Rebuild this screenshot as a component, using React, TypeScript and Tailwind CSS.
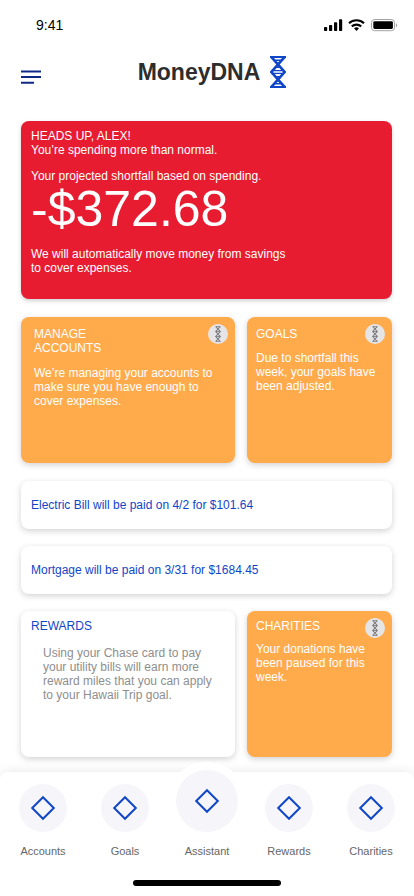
import React from 'react';
import clsx from 'clsx';

interface DnaIconProps {
    className?: string;
}

const DnaIcon: React.FC<DnaIconProps> = ({className}) => (
    <svg viewBox="0 0 16 32" fill="none" stroke="currentColor" className={className} aria-hidden="true">
        <path d="M1.2 .8L14.6 16L1.2 31.2" strokeWidth="2.6"/>
        <path d="M14.8 .8L1.4 16L14.8 31.2" strokeWidth="2.6"/>
        <path d="M0 1h16M0 31h16" strokeWidth="2"/>
        <path d="M3.5 4.2h9M5 11.4h6M2 14.6h12M2 17.4h12M5 20.6h6M3.5 27.8h9" strokeWidth="1.4"/>
    </svg>
);

// Small three-turn helix shown in the corner of managed cards
const DnaBadge: React.FC = () => (
    <span className="absolute right-[7px] top-[7px] flex size-5 items-center justify-center rounded-full bg-[#e5e5e8] text-[#77777b]">
        <svg viewBox="0 0 6 16" fill="none" stroke="currentColor" className="h-4 w-1.5" aria-hidden="true">
            <path d="M.7 .5L5.3 5.5L.7 10.5L5.3 15.5M5.3 .5L.7 5.5L5.3 10.5L.7 15.5" strokeWidth="1.1"/>
            <path d="M.7 .6h4.6M1 5.5h4M1 10.5h4M.7 15.4h4.6" strokeWidth=".8"/>
        </svg>
    </span>
);

const StatusBar: React.FC = () => (
    <div className="flex h-[50px] items-center justify-between pl-9 pr-4">
        <span className="text-sm">9:41</span>
        <svg width="75" height="14" viewBox="0 0 75 14" aria-hidden="true">
            <rect x="1" y="9" width="3.2" height="4" rx=".8"/>
            <rect x="6" y="7" width="3.2" height="6" rx=".8"/>
            <rect x="11" y="4.2" width="3.2" height="8.8" rx=".8"/>
            <rect x="16" y="1.2" width="3.2" height="11.8" rx=".8"/>
            <g fill="none" stroke="black" strokeWidth="2.1">
                <path d="M26 5.2A11 11 0 0 1 41 5.2"/>
                <path d="M28.8 8.4A7 7 0 0 1 38.2 8.4"/>
            </g>
            <path d="M31 10.2A4 4 0 0 1 36 10.2L33.5 12.9Z"/>
            <rect x="48.5" y="1.5" width="23" height="11.2" rx="3" fill="none" stroke="#a3a3a3"/>
            <rect x="50.3" y="3.2" width="19.6" height="7.8" rx="1.4"/>
            <path d="M73 5.2v4c1.6-.6 1.6-3.4 0-4" fill="#a3a3a3"/>
        </svg>
    </div>
);

interface CardProps {
    title: string;
    children: React.ReactNode;
    badge?: boolean;
    className?: string;
    titleClass?: string;
    textClass?: string;
}

const Card: React.FC<CardProps> = ({title, children, badge, className, titleClass, textClass}) => (
    <section className={clsx('relative min-h-[146px] rounded-lg shadow-[0_2px_6px_rgba(0,0,0,0.18)]', className)}>
        <h2 className={titleClass}>{title}</h2>
        <p className={textClass}>{children}</p>
        {badge && <DnaBadge/>}
    </section>
);

const Bill: React.FC<{ children: React.ReactNode }> = ({children}) => (
    <p className="flex h-12 items-center rounded-lg bg-white px-2.5 text-[#1046c8] shadow-[0_2px_6px_rgba(0,0,0,0.18)]">
        {children}
    </p>
);

const tabs = [
    {label: 'Accounts'},
    {label: 'Goals'},
    {label: 'Assistant', main: true},
    {label: 'Rewards'},
    {label: 'Charities'},
];

const TabBar: React.FC = () => (
    <nav className="relative mt-[15px] rounded-t-lg bg-white px-0.5 pb-2.5 pt-3 shadow-[0_0_12px_rgba(0,0,0,0.1)]">
        <span className="absolute -top-2.5 left-1/2 size-[82px] -translate-x-1/2 rounded-full bg-white"/>
        <div className="relative grid grid-cols-5">
            {tabs.map(({label, main}) => (
                <button key={label} className="flex flex-col items-center text-[11px] leading-4 text-[#666666]">
                    <span className="flex h-12 items-end justify-center">
                        <span
                            className={clsx('flex items-center justify-center rounded-full bg-[#f6f6fa]', main ? 'size-[62px]' : 'size-12')}>
                            <svg width="26" height="26" viewBox="0 0 26 26" fill="none" stroke="#1046c8"
                                 strokeWidth="2" aria-hidden="true">
                                <path d="M13 2.2L23.8 13L13 23.8L2.2 13Z"/>
                            </svg>
                        </span>
                    </span>
                    <span className="mt-[11px]">{label}</span>
                </button>
            ))}
        </div>
        <div className="mx-auto mt-[21px] h-1.5 w-[148px] rounded-full bg-black"/>
    </nav>
);

const App: React.FC = () => {
    return (
        <div
            className="flex min-h-screen flex-col overflow-hidden bg-white font-['Liberation_Sans',Arial,sans-serif] text-xs leading-[14px] text-black">
            <StatusBar/>
            <header className="mt-1.5 grid grid-cols-[1fr_auto_1fr] items-end pl-[21px] pr-[11px]">
                <button aria-label="Menu" className="mb-1 w-5">
                    <svg width="20" height="14" viewBox="0 0 20 14" stroke="#0f2a86" strokeWidth="2"
                         aria-hidden="true">
                        <path d="M0 1.5h20M0 7h20M0 12.8h13"/>
                    </svg>
                </button>
                <div className="flex gap-2.5">
                    <h1 className="text-[23px] font-bold leading-8 text-[#2d2d2d]">MoneyDNA</h1>
                    <DnaIcon className="h-8 w-4 text-[#1046c8]"/>
                </div>
            </header>

            <main className="mt-[33px] flex flex-col gap-[18px] pl-[21px] pr-[22px]">
                <section
                    className="rounded-lg bg-[#e71c30] px-2.5 pb-6 pt-2 text-white shadow-[0_2px_4px_rgba(0,0,0,0.18)]">
                    <h2>HEADS UP, ALEX!</h2>
                    <p>You’re spending more than normal.</p>
                    <p className="mt-3">Your projected shortfall based on spending.</p>
                    <p className="text-[50px] leading-[52px]">-$372.68</p>
                    <p className="mt-3 max-w-[260px]">
                        We will automatically move money from savings to cover expenses.
                    </p>
                </section>

                <div className="grid grid-cols-[214fr_145fr] gap-3">
                    <Card title="MANAGE ACCOUNTS" badge className="bg-[#ffab4c] px-[13px] pt-2.5 text-white"
                          titleClass="max-w-[100px]" textClass="mt-[11px]">
                        We’re managing your accounts to make sure you have enough to cover expenses.
                    </Card>
                    <Card title="GOALS" badge className="bg-[#ffab4c] px-[9px] pt-2.5 text-white"
                          textClass="mt-2.5">
                        Due to shortfall this week, your goals have been adjusted.
                    </Card>
                </div>

                <div className="flex flex-col gap-[17px]">
                    <Bill>Electric Bill will be paid on 4/2 for $101.64</Bill>
                    <Bill>Mortgage will be paid on 3/31 for $1684.45</Bill>
                    <div className="grid grid-cols-[214fr_145fr] gap-3">
                        <Card title="REWARDS" className="bg-white px-2.5 pt-2" titleClass="text-[#1046c8]"
                              textClass="mt-[13px] px-3 text-[#8e8e8e]">
                            Using your Chase card to pay your utility bills will earn more reward miles that you can
                            apply to your Hawaii Trip goal.
                        </Card>
                        <Card title="CHARITIES" badge className="bg-[#ffab4c] px-[9px] pt-2 text-white"
                              textClass="mt-[9px]">
                            Your donations have been paused for this week.
                        </Card>
                    </div>
                </div>
            </main>

            <TabBar/>
        </div>
    );
};

export default App;
